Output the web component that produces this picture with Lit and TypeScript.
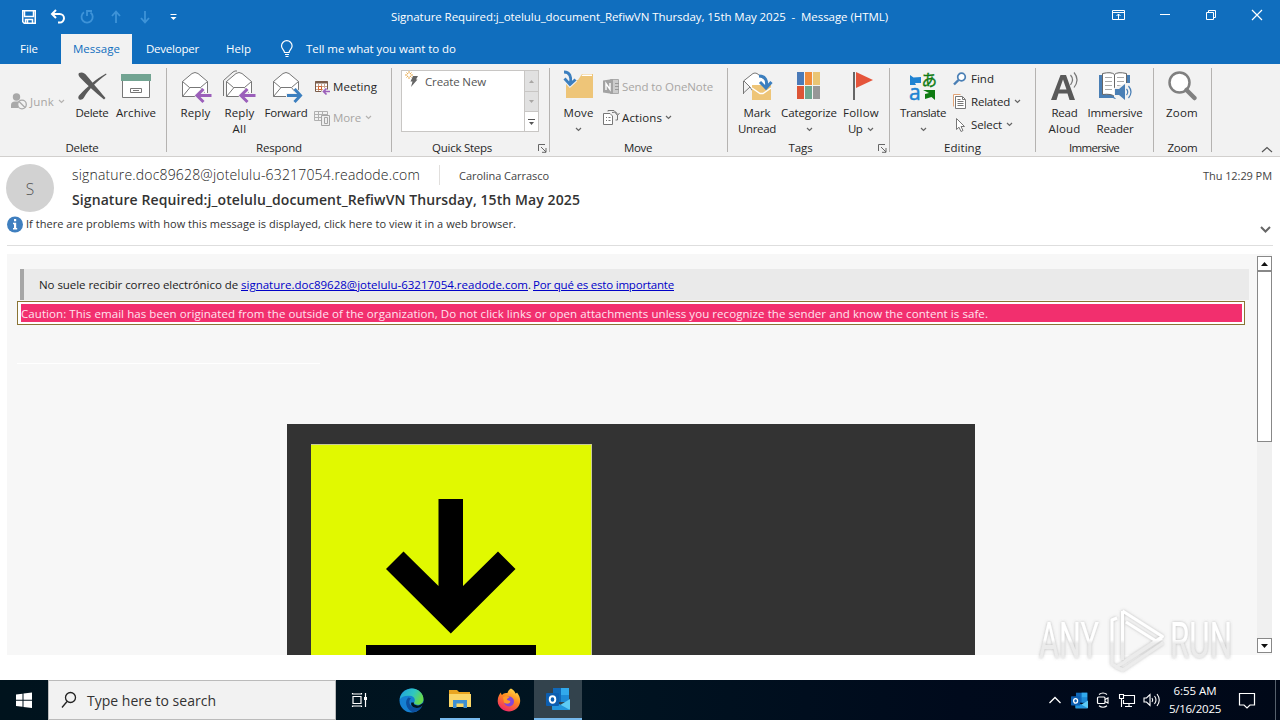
import { LitElement, html, css, svg } from "lit";
import { customElement, property } from "lit/decorators.js";

/** A run of text that is tracked in or out to take exactly `w` pixels. */
@customElement("fit-text")
export class FitText extends LitElement {
  static styles = css`
    :host {
      display: inline-block;
      white-space: pre;
      flex: none;
    }
  `;

  @property({ type: Number })
  w = 0;

  @property()
  text = "";

  updated() {
    this.style.width = "max-content";
    this.style.letterSpacing = "0";
    const natural = this.getBoundingClientRect().width;
    this.style.letterSpacing = `${(this.w - natural) / this.text.length}px`;
    this.style.width = `${this.w}px`;
  }

  render() {
    return html`${this.text}`;
  }
}

const t = (text: string, w: number) =>
  html`<fit-text .text=${text} .w=${w}></fit-text>`;

const icon = (w: number, h: number, body: unknown) =>
  html`<svg width=${w} height=${h} viewBox="0 0 ${w} ${h}" fill="none">
    ${body}
  </svg>`;

const chevron = (color = "#666") =>
  icon(7, 5, svg`<path d="M1 1l2.5 2.5L6 1" stroke=${color} stroke-width="1.2"/>`);

/* quick access and window icons */
const save = icon(
  16,
  16,
  svg`<path d="M1.75 1.75h12.5v12.5h-11l-1.5-1.5z" stroke="#fff" stroke-width="1.5"/><path d="M3.5 2v5.5h9V2M4.500 14.500v-4h7v4M6.500 11v3" stroke="#fff" stroke-width="1.5"/>`
);
const undo = icon(
  16,
  16,
  svg`<path d="M6 1L2 5l4 4M2.500 5h7.200a4.300 4.300 0 0 1 0 8.600H8" stroke="#fff" stroke-width="2"/>`
);
const redo = icon(
  16,
  16,
  svg`<path d="M5 3.300A5.600 5.600 0 1 0 11.500 3.500M8 7V2h5" stroke="#3e93d8" stroke-width="1.800"/>`
);
const up = icon(
  16,
  16,
  svg`<path d="M8 14V3M4 7l4-4.500L12 7" stroke="#3e93d8" stroke-width="1.800"/>`
);
const down = icon(
  16,
  16,
  svg`<path d="M8 2v11M4 9l4 4.500L12 9" stroke="#3e93d8" stroke-width="1.800"/>`
);
const customize = icon(
  16,
  16,
  svg`<path d="M4.500 5.500h6" stroke="#fff"/><path d="M4.500 8h6l-3 3z" fill="#fff"/>`
);
const ribbonMode = icon(
  14,
  12,
  svg`<path d="M.5 1.500h12v9H.5zM.5 3.500h12M6.500 10V5M4.500 7l2-2 2 2" stroke="#fff"/>`
);
const minimize = icon(12, 12, svg`<path d="M1 5.500h10" stroke="#fff"/>`);
const restore = icon(
  12,
  12,
  svg`<path d="M1.500 3.500h7v7h-7zM3.500 3V1.500h7v7H9" stroke="#fff"/>`
);
const close = icon(12, 12, svg`<path d="M1 1l10 10M11 1L1 11" stroke="#fff" stroke-width="1.200"/>`);
const bulb = icon(
  14,
  18,
  svg`<path d="M4.500 12.500c0-2.500-3-3.500-3-6.500a5.300 5.300 0 0 1 10.600 0c0 3-3 4-3 6.500zM5 14.500h4M5.500 16.500h3" stroke="#fff" stroke-width="1.200"/>`
);

/* large ribbon icons */
const deleteIcon = icon(
  32,
  32,
  svg`<path d="M3 3c3-1.500 6 0 8 3 6 7 10 12 18.500 22l-1.500 1.500C19 22 11 15 4 7.500 2.500 6 2 4 3 3z" fill="#5a5a5a"/><path d="M30.500 4.500C21 11 13 19 8 27.500c-1.500 2.500-4.500 3-5.500 1-.5-1.300 0-2.500 1-3.500C11 17 20 9 30 3.500z" fill="#5a5a5a"/>`
);
const archiveIcon = icon(
  32,
  32,
  svg`<path fill="#fff" stroke="#777" d="M2.500 9.500h27v18h-27z"/><path fill="#72a492" d="M1 4h30v7H1z"/><path stroke="#777" d="M10.500 18.500h11v4h-11zM13 20.500h6"/>`
);
const envelope = svg`<path fill="#fff" stroke="#777" d="M3.500 11.500L13 3.500q3-2 6 0l9.500 8v15h-25z"/><path stroke="#777" d="M3.500 11.500l7 6h11l7-6M3.500 26.500l7.500-9M28.500 26.500l-7-9"/>`;
const replyArrow = svg`<path d="M31 25.500H19M24.500 20l-6 5.500 6 5.500" stroke="#f2f2f2" stroke-width="5"/><path d="M32.500 25.500H19M24.500 19l-6.500 6.500 6.500 6.500" stroke="#9b5fba" stroke-width="3"/>`;
const replyIcon = icon(33, 32, svg`${envelope}${replyArrow}`);
const replyAllIcon = icon(
  33,
  32,
  svg`<path d="M.5 26V10.500L10 2q2-1.500 4-1" stroke="#777"/>${envelope}${replyArrow}`
);
const forwardIcon = icon(
  32,
  32,
  svg`${envelope}<path d="M16 25.500h14M24.500 19.500l6 6-6 6" stroke="#f2f2f2" stroke-width="5"/><path d="M17 25.500h13M24.500 19l6 6.500-6 6.500" stroke="#3c7fbf" stroke-width="3"/>`
);
const moveIcon = icon(
  32,
  32,
  svg`<path fill="#eec578" d="M3 28V10h12l4-6h11v24z"/><path fill="#fff" d="M18.500 6l1-1.500h9.500V6z"/><path d="M1 3c6-1 7.500 4 6.500 10M1.500 8.500l5.500 6 5.500-5" stroke="#f2f2f2" stroke-width="5"/><path d="M1 2c6 0 7.500 5 6.500 11M1.500 8.500l5.500 6 5.500-5" stroke="#3c7fbf" stroke-width="2.800"/>`
);
const unreadIcon = icon(
  32,
  32,
  svg`<path fill="#fff" stroke="#777" d="M2.500 24V11L12 3.500q2-1 4 0l10 8v10h-14L9 17M2.500 23L9 17 3 11"/><path fill="#eec578" d="M11 15h19v15H11z"/><path stroke="#fff" d="M11 18l8 5.500h3l8-5.500" stroke-width="1.500"/><path d="M18 6c7 0 8 5 7.500 10M19 12l6 6 5.500-6" stroke="#3c7fbf" stroke-width="3"/>`
);
const categorizeIcon = icon(
  32,
  32,
  svg`<path fill="#4a7ab8" d="M4 2h7v13H4z"/><path fill="#f08c3c" d="M12 2h7v13h-7z"/><path fill="#eac574" d="M20 2h7v13h-7z"/><path fill="#dc5536" d="M4 16h7v13H4z"/><path fill="#6ea68f" d="M12 16h7v13h-7z"/><path fill="#979797" d="M20 16h7v13h-7z"/>`
);
const flagIcon = icon(
  32,
  32,
  svg`<path fill="#e5553b" d="M11 2l17 8-17 8z"/><path fill="#666" d="M8 2h2v28H8z"/>`
);
const translateIcon = icon(
  32,
  32,
  svg`<path fill="#1e82d2" d="M3 5l3.500 2.500L14 7v6H8l1 2H3z"/><path fill="#0f7b12" d="M16 20h12v10l-3.500-3-6.500 2v-5l4-1z"/><text x="2" y="30" font-size="21" fill="#1e82d2" stroke="#1e82d2" stroke-width=".5">a</text><text x="14.500" y="15.500" font-size="15.500" font-family="Noto Sans CJK JP" fill="#0f7b12" stroke="#0f7b12" stroke-width=".4">あ</text>`
);
const readAloudIcon = icon(
  32,
  32,
  svg`<path fill="#595959" fill-rule="evenodd" d="M2 30L11.500 5H17L26 30h-5.500L18.500 23.500H9.500L7.500 30zM10.500 19.500h7L14 9.500z"/><path stroke="#777" stroke-width="1.200" d="M21.500 5q4 4.500 0 10M25 2.500q6 7 0 15"/>`
);
const readerIcon = icon(
  36,
  32,
  svg`<path fill="#4a7fb5" d="M2 5h31v23H20l-2 1-2-1H2z"/><path fill="#fff" stroke="#666" d="M5.500 3.500q9-2 12 1 3-3 12-1v21q-9-1-12 2-3-3-12-2zM17.500 5v21"/><path stroke="#aaa" d="M8 7.500h7M8 11.500h7M8 15.500h7M8 19.500h7M20 7.500h7M20 11.500h7M20 15.500h7"/><path fill="#f2f2f2" d="M17 18l12-5h7v20H24l-7-6z"/><path fill="#4a7fb5" d="M18 19h4l6-5v16l-6-5h-4z"/><path stroke="#4a7fb5" stroke-width="1.200" d="M29.500 19q2.500 3 0 6M31.500 16q5 6 0 12"/>`
);
const zoomIcon = icon(
  32,
  32,
  svg`<circle cx="13.500" cy="12.500" r="10" fill="#fff" stroke="#808080" stroke-width="2.500"/><path d="M20.500 20l8 8" stroke="#808080" stroke-width="4.500" stroke-linecap="round"/>`
);

/* small ribbon icons */
const junkIcon = icon(
  17,
  17,
  svg`<g fill="#a9a9a9"><circle cx="5.500" cy="4" r="3.700"/><path d="M0 15V12q0-3.500 4-3.500h4L7 15z"/></g><circle cx="11" cy="11.500" r="4.300" fill="#f2f2f2" stroke="#a9a9a9" stroke-width="1.300"/><path d="M8 8.500l6 6" stroke="#a9a9a9" stroke-width="1.300"/>`
);
const meetingIcon = icon(
  16,
  16,
  svg`<path d="M1.500 2.500h12v10h-12z" fill="#fff" stroke="#7a5c4a"/><path d="M1 3.500h13" stroke="#7a5c4a" stroke-width="2"/><path d="M4.500 5v7M7.500 5v7M10.500 5v5M2 7.500h11M2 10.500h8" stroke="#c9a38c"/><path stroke="#d5632e" d="M4.500 7.500h3v3h-3z"/><path d="M16 12.500h-6M12.500 9.500l-3 3 3 3" stroke="#f2f2f2" stroke-width="3.500"/><path d="M16 12.500h-6M12.500 9.500l-3 3 3 3" stroke="#9b5fba" stroke-width="1.700"/>`
);
const moreIcon = icon(
  16,
  16,
  svg`<path d="M.5 1.500h13v9H.5zM1 4.500h12M4.500 2v8M8.500 2v3M1 7.500h6" stroke="#b0b0b0"/><path d="M7.500 5.500h8v10h-8z" fill="#eee" stroke="#a4a4a4"/><path d="M10.500 7.500h3v6h-3z" stroke="#a4a4a4"/>`
);
const oneNoteIcon = icon(
  17,
  17,
  svg`<path fill="#ccc" stroke="#aaa" d="M7.500 1.500h8v14h-8z"/><path fill="#a3a3a3" d="M0 2.500L10 1v15L0 14.500z"/><path stroke="#fff" stroke-width="1.400" d="M3 12V5.500l4 6V5"/><path stroke="#999" d="M12 5.500h4M12 8.500h4M12 11.500h4"/>`
);
const actionsIcon = icon(
  17,
  17,
  svg`<path fill="#fff" stroke="#777" d="M.5 4.500H7L9.500 7v8.500h-9z"/><path stroke="#777" d="M3 8.500h1M5.500 8.500h2M3 11.500h1M5.500 11.500h2M5 2.500V1.500h6l2 2M12.500 11h2V6M9 3.500q5-1 5.500 2M12.500 4l2 2.500 2-2.500"/>`
);
const findIcon = icon(
  14,
  14,
  svg`<circle cx="8.500" cy="5" r="3.800" fill="#fff" stroke="#4a7fb5" stroke-width="1.700"/><path d="M5.500 8L1 12.500" stroke="#4a7fb5" stroke-width="2.400"/>`
);
const relatedIcon = icon(
  14,
  16,
  svg`<path fill="#fff" stroke="#e2a477" d="M.5 12.500V.5h7"/><path fill="#fff" stroke="#777" d="M2.500 2.500h7l3 3v9h-10z"/><path stroke="#777" d="M9.500 3v2.500H12M4.500 7.500h6M4.500 9.500h6M4.500 11.500h6M4.500 5.500h3"/>`
);
const selectIcon = icon(
  14,
  16,
  svg`<path fill="#fff" stroke="#777" d="M3.500 1.500v11l2.500-2.300 2 4.300 2-1-2-4h3.500z"/>`
);
const boltIcon = icon(
  16,
  18,
  svg`<path fill="#666" d="M8 5h5l-2 3.500h1.500L6 16l1.500-5.500H5.500z"/><path stroke="#e6a84a" d="M4 0v8M0 4h8M1.500 1.500l5 5M6.500 1.500l-5 5"/><circle cx="4" cy="4" r="1.700" fill="#fff"/>`
);
const launcher = icon(
  9,
  9,
  svg`<path stroke="#666" d="M.5 7V.5H7M3 3l5 5M8 4v4.300H4"/>`
);
const arrow = (dir: "up" | "down", color: string) =>
  icon(7, 4, svg`<path fill=${color} d=${dir === "up" ? "M0 4h7L3.500 0z" : "M0 0h7L3.500 4z"} />`);
const spinArrow = (dir: "up" | "down", color: string) =>
  icon(5, 3, svg`<path fill=${color} d=${dir === "up" ? "M0 3h5L2.500 0z" : "M0 0h5L2.500 3z"} />`);

/* taskbar icons */
const windowsIcon = icon(
  16,
  16,
  svg`<path fill="#fff" d="M0 2.500l6.500-.8v6H0zM7.500 1.500l8.500-1v7.200H7.500zM0 8.700h6.500v6l-6.500-.8zM7.500 8.700H16V16l-8.500-1z"/>`
);
const searchIcon = icon(
  16,
  18,
  svg`<circle cx="9.500" cy="6.500" r="5" stroke="#222" stroke-width="1.300"/><path d="M6 10.500l-5 6" stroke="#222" stroke-width="1.300"/>`
);
const taskViewIcon = icon(
  16,
  16,
  svg`<path stroke="#fff" stroke-width="1.200" d="M1 4.500h8v7H1zM.5 2.500V1M9.500 2.500V1M.5 2h9M.5 15v-1.500M9.500 15v-1.500M.5 14h9M13.500 1v14"/><path fill="#fff" d="M12 5h3v3h-3z"/>`
);
const edgeIcon = html`<svg width="25" height="25" viewBox="0 0 24 24">
  <defs>
    <linearGradient id="e1" x1="0" y1="0" x2="1" y2=".4">
      <stop offset="0" stop-color="#1f9fe0" />
      <stop offset=".6" stop-color="#2fc6c0" />
      <stop offset="1" stop-color="#66d84e" />
    </linearGradient>
  </defs>
  <circle cx="12" cy="12" r="11.500" fill="#1580d2" />
  <path fill="url(#e1)" d="M.6 11C2 3.500 8 .4 12.500.5 19 .7 23.600 5.500 23.500 11c-.1 3.500-3 5-5.500 5-2 0-4-.8-3.500-2 1.500-2 .8-6-4-6.500C6 7 2 8.500.6 11z" />
  <path fill="#0d4f9e" d="M9 9c-4 3-2.500 11 4 14.200 4 0 7.500-2.500 8.500-5.200-5 2.500-11 .5-11.500-4-.2-2 .5-3.500 1.500-4.200z" />
  <path fill="#03141e" d="M14.400 14c-1 1.500 1.500 3.300 5 2.500 2-.5 3.500-1.700 4-3v3l-3 2c-5 2-10-1-8.500-4.500z" />
</svg>`;
const explorerIcon = icon(
  22,
  20,
  svg`<path fill="#e9a520" d="M0 1h8l2 2h11v6H0z"/><path fill="#fbd667" d="M0 5h22v13H0z"/><path fill="#3f8fd2" d="M4 11h14v8h-3.500v-4.500h-7V19H4z"/>`
);
const firefoxIcon = html`<svg width="24" height="24" viewBox="0 0 24 24">
  <defs>
    <linearGradient id="f1" x1=".8" y1="0" x2=".3" y2="1">
      <stop offset="0" stop-color="#ffe14a" />
      <stop offset=".45" stop-color="#ff8a1f" />
      <stop offset="1" stop-color="#f0246a" />
    </linearGradient>
  </defs>
  <path fill="url(#f1)" d="M14 .5c3 1.500 4 3.500 4.500 5 1 0 1.500-1 1.500-1 3 4 3.500 7 3 10-1 5.500-6 9-11 9S1 19.500.7 13.500C.5 9 2.500 6 4 4.500c0 1.500.5 2 1 2.500C6.500 5 9 5 10.500 5c.5-2 2-4 3.500-4.500z" />
  <circle cx="12" cy="13.500" r="5" fill="#8445d8" />
  <path fill="#ff9a26" d="M6 9.500c2-2 5-1.500 6.500 0-2 .5-2.500 1.500-2.500 2.500 2 .5 4 .5 3 2.500-2 2-5 1-6 0z" />
</svg>`;
const outlookIcon = (size: number) => html`<svg width=${size} height=${size} viewBox="0 0 24 24">
  <path fill="#1068b8" d="M7 1h16v14H7z" />
  <path fill="#31a9ec" d="M15 1h8v7h-8z" />
  <path fill="#1d8ad6" d="M15 8h8v7h-8z" />
  <path fill="#5dcbf5" d="M6 23l18-11v10q0 1-1 1z" />
  <path fill="#2396dd" d="M6 13l18 10H7q-1 0-1-1z" />
  <rect x="0" y="6" width="13" height="13" rx="1" fill="#0c5eb0" />
  <ellipse cx="6.500" cy="12.500" rx="2.800" ry="3.200" fill="none" stroke="#fff" stroke-width="1.900" />
</svg>`;
const trayCaret = icon(14, 8, svg`<path d="M1.500 7L7 1.500 12.500 7" stroke="#fff" stroke-width="1.300"/>`);
const cameraIcon = icon(
  14,
  16,
  svg`<rect x="1.500" y="5" width="7.500" height="6.500" rx="1" stroke="#fff" stroke-width="1.200"/><path d="M9 7.500l3-1.500v5L9 9.500M3 2.500q4-3 8 0M3 13.700q4 3 8 0" stroke="#fff" stroke-width="1.100"/>`
);
const networkIcon = icon(
  16,
  15,
  svg`<path d="M5 2.500h10.500v8H4.500V7M10 10.500v3M6 13.500h7M.5 1.500h4v4h-4zM2.500 6v8" stroke="#fff" stroke-width="1.100"/>`
);
const volumeIcon = icon(
  17,
  14,
  svg`<path d="M1 5h2.500L7 1.500v11L3.500 9H1zM9 5q1.500 2 0 4M11.500 3q3 4 0 8M14 1q4.500 6 0 12" stroke="#fff" stroke-width="1.100"/>`
);
const noticeIcon = icon(
  18,
  17,
  svg`<path d="M1.500 1.500h15v11.500H12L9 16l-3-3H1.500z" stroke="#fff" stroke-width="1.200"/>`
);

@customElement("app-root")
export default class AppRoot extends LitElement {
  static styles = css`
    :host {
      display: flex;
      flex-direction: column;
      position: relative;
      width: 1280px;
      height: 720px;
      overflow: hidden;
      background: #fff;
      color: #262626;
      font-family: "Open Sans", "Noto Sans", sans-serif;
      font-size: 11.5px;
      line-height: 16px;
    }
    * {
      box-sizing: border-box;
    }
    svg {
      display: block;
      flex: none;
      overflow: visible;
    }

    .titlebar {
      display: grid;
      grid-template-columns: 391px 1fr auto;
      height: 34px;
      background: #106ebe;
      color: #fff;
      align-items: center;
      justify-items: start;
    }
    .quick {
      display: flex;
      padding-left: 14px;
    }
    .quick > * {
      width: 29px;
      display: flex;
      justify-content: center;
    }
    .window {
      display: flex;
      height: 34px;
      padding-bottom: 4px;
    }
    .window > * {
      width: 46px;
      display: flex;
      align-items: center;
      justify-content: center;
    }

    .tabs {
      display: flex;
      align-items: center;
      height: 30px;
      background: #106ebe;
      color: #fff;
      padding-left: 20px;
    }
    .tab {
      margin-right: 27px;
    }
    .tab.file {
      margin-right: 23px;
    }
    .tab.active {
      height: 30px;
      padding: 7px 12px;
      margin-right: 14px;
      background: #f2f2f2;
      color: #106ebe;
    }
    .tell {
      display: flex;
      align-items: center;
      gap: 12px;
      margin-left: 2px;
    }

    .ribbon {
      display: flex;
      height: 93px;
      background: #f2f2f2;
      border-bottom: 1px solid #d2d0ce;
      padding-top: 4px;
    }
    .group {
      display: flex;
      flex-direction: column;
      height: 84px;
      border-right: 1px solid #b5b3b1;
    }
    .delete { width: 167px; }
    .respond { width: 225px; padding-left: 7px; }
    .steps { width: 158px; padding-left: 9px; }
    .move { width: 178px; padding-left: 7px; }
    .tags { width: 162px; padding-left: 6px; }
    .editing { width: 146px; padding-left: 9px; }
    .immersive { width: 118px; padding-left: 7px; }
    .zoomg { width: 58px; padding-left: 5px; }
    .items {
      display: flex;
      height: 72px;
      flex: none;
    }
    .caption {
      display: flex;
      justify-content: center;
      position: relative;
      height: 16px;
    }
    .delete .caption { padding-right: 2px; }
    .respond .caption { padding-right: 7px; }
    .steps .caption { padding-right: 26px; }
    .move .caption { padding-right: 8px; }
    .tags .caption { padding-right: 22px; }
    .editing .caption { padding-right: 9px; }
    .immersive .caption { padding-right: 8px; }
    .zoomg .caption { padding-right: 5px; }
    .caption svg {
      position: absolute;
      right: 2px;
      top: 4px;
    }
    .big {
      display: flex;
      flex-direction: column;
      align-items: center;
      padding-top: 2px;
      flex: none;
    }
    .big > svg {
      margin-bottom: 3px;
    }
    .w43 { width: 43px; }
    .w45 { width: 45px; }
    .w46 { width: 46px; }
    .w48 { width: 48px; }
    .w40 { width: 40px; }
    .w58 { width: 58px; }
    .drop {
      height: 16px;
      display: flex;
      align-items: center;
      gap: 5px;
    }
    .small {
      display: flex;
      flex-direction: column;
    }
    .row {
      display: flex;
      align-items: center;
      height: 23px;
      gap: 3px;
    }
    .row .chev {
      margin-left: 2px;
    }
    .disabled {
      color: #a8a6a4;
    }
    .junk {
      width: 72px;
      padding: 22px 0 0 11px;
    }
    .junk .row {
      gap: 2px;
    }
    .two {
      padding: 7px 0 0 4px;
      gap: 8px;
    }
    .two .chev {
      margin-left: 1px;
    }
    .move .two {
      padding-left: 3px;
    }
    .move .row {
      gap: 2px;
    }
    .three {
      padding-left: 6px;
      margin-top: -1px;
    }
    .three .row {
      gap: 4px;
    }
    .three .chev {
      margin-left: 0;
    }

    .gallery {
      display: grid;
      grid-template-columns: 1fr 14px;
      width: 138px;
      height: 62px;
      margin-top: 2px;
      border: 1px solid #c8c6c4;
      background: #fff;
    }
    .step {
      display: flex;
      gap: 4px;
      padding-left: 3px;
      color: #555;
    }
    .step fit-text {
      margin-top: 3px;
    }
    .spin {
      display: grid;
      grid-template-rows: 21px 20px 1fr;
      border-left: 1px solid #c8c6c4;
    }
    .spin > * {
      display: grid;
      place-content: center;
      justify-items: center;
      gap: 2px;
      background: #e1e1e1;
      border-bottom: 1px solid #c8c6c4;
    }
    .spin > :last-child {
      background: #fff;
      border: 0;
    }
    .collapse {
      margin: 78px 0 0 49px;
    }

    .header {
      display: grid;
      grid-template-columns: 66px 1fr;
      grid-template-rows: 48px auto;
      align-content: start;
      height: 88px;
      padding: 7px 8px 0 6px;
    }
    .avatar {
      width: 48px;
      height: 48px;
      border-radius: 50%;
      background: #d2d2d2;
      color: #555;
      font: 300 15.5px/50px "Open Sans", sans-serif;
      text-align: center;
    }
    .from {
      display: flex;
      align-items: center;
      height: 22px;
      font-size: 11px;
      color: #444;
    }
    .sender {
      font-size: 14px;
      font-weight: 300;
      color: #222;
    }
    .to {
      border-left: 1px solid #e1dfdd;
      margin-left: 19px;
      padding: 3px 0 1px 19px;
    }
    .time {
      margin: 2px 0 0 auto;
    }
    .subject {
      font-size: 14px;
      font-weight: 600;
      line-height: 20px;
      margin-top: 4px;
      color: #333;
    }
    .info {
      grid-column: 1 / -1;
      display: flex;
      align-items: center;
      gap: 3px;
      height: 18px;
      font-size: 11px;
      color: #333;
      margin-top: 3px;
    }
    .info .expand {
      margin: 11px 1px 0 auto;
    }
    .rule {
      height: 1px;
      margin: 0 7px;
      background: #dedede;
    }

    .message {
      display: flex;
      justify-content: space-between;
      height: 401px;
      margin: 8px 8px 0 7px;
      background: #f7f7f7;
      overflow: hidden;
    }
    .mail {
      width: 1242px;
      padding: 15px 0 0 10px;
      color: #222;
    }
    .notice {
      height: 31px;
      margin-left: 3px;
      border-left: 4px solid #a6a6a6;
      background: #eaeaea;
      padding: 8px 0 0 15px;
      display: flex;
    }
    .notice a {
      color: #0000c8;
    }
    .notice a fit-text {
      text-decoration: underline;
    }
    .caution {
      width: 1228px;
      height: 24px;
      margin-top: 1px;
      border: 1px solid #8a7434;
      background: #fff;
      padding: 2px 2px 2px 3px;
    }
    .caution div {
      height: 18px;
      background: #f22f6e;
      color: #ffe3ee;
      line-height: 19px;
    }
    .hair {
      width: 303px;
      height: 1px;
      margin-top: 38px;
      background: #fff;
    }
    .card {
      width: 688px;
      height: 231px;
      margin: 60px 0 0 270px;
      padding: 20px 24px;
      background: #333;
    }
    .scroll {
      display: flex;
      flex-direction: column;
      width: 15px;
      margin: 2px 0;
      background: #f0f0f0;
    }
    .btn {
      display: grid;
      place-content: center;
      height: 15px;
      border: 1px solid #888;
      background: #fff;
      flex: none;
    }
    .thumb {
      height: 171px;
      border: 1px solid #888;
      background: #fff;
      margin-bottom: auto;
    }

    .mark {
      position: absolute;
      left: 1030px;
      top: 600px;
    }

    .taskbar {
      display: flex;
      align-items: center;
      height: 40px;
      margin-top: 25px;
      background: linear-gradient(90deg, #00131d, #001421 45%, #000a1c 75%, #000818);
      color: #fff;
    }
    .start,
    .task {
      display: flex;
      align-items: center;
      justify-content: center;
      width: 48px;
      height: 40px;
    }
    .search {
      display: flex;
      align-items: center;
      gap: 10px;
      width: 288px;
      height: 40px;
      padding-left: 12px;
      background: #f2f2f2;
      border: 1px solid #bbb;
      color: #333;
      font-size: 14px;
    }
    .search fit-text {
      margin-top: 2px;
    }
    .task {
      margin-right: 1px;
    }
    .task.view {
      margin-right: 3px;
    }
    .task.open {
      width: 40px;
      margin: 0 5px 0 4px;
      border-bottom: 2px solid #76b9ed;
    }
    .task.current {
      background: #33434d;
      border-bottom: 2px solid #76b9ed;
    }
    .tray {
      display: flex;
      align-items: center;
      margin-left: auto;
    }
    .cell {
      display: flex;
      justify-content: center;
      width: 24px;
    }
    .clock {
      display: flex;
      flex-direction: column;
      align-items: center;
      line-height: 18px;
      width: 52px;
      margin-left: 6px;
    }
    .notes {
      margin: 0 19px 0 17px;
    }
    .edge {
      width: 5px;
      height: 40px;
      border-left: 1px solid #56606c;
    }
  `;

  private _big(cls: string, glyph: unknown, ...lines: unknown[]) {
    return html`<div class="big ${cls}">${glyph}${lines}</div>`;
  }

  private _row(glyph: unknown, label: unknown, drop = false, disabled = false) {
    return html`<div class="row ${disabled ? "disabled" : ""}">
      ${glyph}${label}${drop
        ? html`<span class="chev">${chevron(disabled ? "#b5b3b1" : "#666")}</span>`
        : ""}
    </div>`;
  }

  private _drop(label: unknown = "") {
    return html`<span class="drop">${label}${chevron()}</span>`;
  }

  private _ribbon() {
    return html`<div class="ribbon">
      <div class="group delete">
        <div class="items">
          <div class="junk">${this._row(junkIcon, t("Junk", 24), true, true)}</div>
          ${this._big("w40", deleteIcon, t("Delete", 33))}
          ${this._big("w48", archiveIcon, t("Archive", 40))}
        </div>
        <div class="caption">${t("Delete", 33)}</div>
      </div>
      <div class="group respond">
        <div class="items">
          ${this._big("w43", replyIcon, t("Reply", 30))}
          ${this._big("w45", replyAllIcon, t("Reply", 30), t("All", 14))}
          ${this._big("w48", forwardIcon, t("Forward", 43))}
          <div class="small two">
            ${this._row(meetingIcon, t("Meeting", 44))}
            ${this._row(moreIcon, t("More", 28), true, true)}
          </div>
        </div>
        <div class="caption">${t("Respond", 46)}</div>
      </div>
      <div class="group steps">
        <div class="items">
          <div class="gallery">
            <div class="step">${boltIcon}${t("Create New", 61)}</div>
            <div class="spin">
              <span>${spinArrow("up", "#a8a6a4")}</span>
              <span>${spinArrow("down", "#a8a6a4")}</span>
              <span>${icon(7, 1, svg`<path fill="#555" d="M0 0h7v1H0z"/>`)}${spinArrow("down", "#555")}</span>
            </div>
          </div>
        </div>
        <div class="caption">${t("Quick Steps", 60)}${launcher}</div>
      </div>
      <div class="group move">
        <div class="items">
          ${this._big("w43", moveIcon, t("Move", 30), this._drop())}
          <div class="small two">
            ${this._row(oneNoteIcon, t("Send to OneNote", 91), false, true)}
            ${this._row(actionsIcon, t("Actions", 40), true)}
          </div>
        </div>
        <div class="caption">${t("Move", 28)}</div>
      </div>
      <div class="group tags">
        <div class="items">
          ${this._big("w46", unreadIcon, t("Mark", 27), t("Unread", 38))}
          ${this._big("w58", categorizeIcon, t("Categorize", 56), this._drop())}
          ${this._big("w46", flagIcon, t("Follow", 36), this._drop(t("Up", 14)))}
        </div>
        <div class="caption">${t("Tags", 24)}${launcher}</div>
      </div>
      <div class="group editing">
        <div class="items">
          ${this._big("w48", translateIcon, t("Translate", 46), this._drop())}
          <div class="small three">
            ${this._row(findIcon, t("Find", 23))}
            ${this._row(relatedIcon, t("Related", 39), true)}
            ${this._row(selectIcon, t("Select", 31), true)}
          </div>
        </div>
        <div class="caption">${t("Editing", 37)}</div>
      </div>
      <div class="group immersive">
        <div class="items">
          ${this._big("w43", readAloudIcon, t("Read", 26), t("Aloud", 32))}
          ${this._big("w58", readerIcon, t("Immersive", 55), t("Reader", 37))}
        </div>
        <div class="caption">${t("Immersive", 50)}</div>
      </div>
      <div class="group zoomg">
        <div class="items">${this._big("w46", zoomIcon, t("Zoom", 32))}</div>
        <div class="caption">${t("Zoom", 30)}</div>
      </div>
      <div class="collapse">
        ${icon(12, 7, svg`<path d="M1 6l5-4.500L11 6" stroke="#555" stroke-width="1.200"/>`)}
      </div>
    </div>`;
  }

  private _watermark() {
    return html`<svg class="mark" width="240" height="80" viewBox="0 0 240 80" fill="none">
      <defs>
        <linearGradient id="w" gradientUnits="userSpaceOnUse" x1="0" y1="12" x2="0" y2="70">
          <stop offset="0" stop-color="#fff" />
          <stop offset=".48" stop-color="#fff" />
          <stop offset=".54" stop-color="#ebebeb" />
          <stop offset="1" stop-color="#ececec" />
        </linearGradient>
        <filter id="s" x="-10%" y="-10%" width="120%" height="130%">
          <feDropShadow dx="0" dy="0" stdDeviation="1.800" flood-color="#777" flood-opacity=".5" />
        </filter>
      </defs>
      <g filter="url(#s)">
        <g font-family="Roboto, sans-serif" font-size="50" fill="url(#w)">
          <text x="9" y="58" textLength="60" lengthAdjust="spacingAndGlyphs">ANY</text>
          <text x="140" y="58" textLength="62" lengthAdjust="spacingAndGlyphs">RUN</text>
        </g>
        <path
          d="M87 18l-5 2v44l5 3M92.500 11v49M92.500 11l40 25.500-38 25M96 22l30 19M132 38L93 63l-7 4 7 3 40-27"
          stroke="url(#w)"
          stroke-width="3"
          stroke-linejoin="round"
        />
      </g>
    </svg>`;
  }

  render() {
    return html`
      <div class="titlebar">
        <div class="quick">
          ${[save, undo, redo, up, down, customize].map((i) => html`<span>${i}</span>`)}
        </div>
        ${t(
          "Signature Required:j_otelulu_document_RefiwVN Thursday, 15th May 2025  -  Message (HTML)",
          497
        )}
        <div class="window">
          ${[ribbonMode, minimize, restore, close].map((i) => html`<span>${i}</span>`)}
        </div>
      </div>
      <div class="tabs">
        <span class="tab file">${t("File", 18)}</span>
        <span class="tab active">${t("Message", 47)}</span>
        <span class="tab">${t("Developer", 53)}</span>
        <span class="tab">${t("Help", 25)}</span>
        <span class="tell">${bulb}${t("Tell me what you want to do", 150)}</span>
      </div>
      ${this._ribbon()}
      <div class="header">
        <div class="avatar">S</div>
        <div>
          <div class="from">
            <span class="sender">
              ${t("signature.doc89628@jotelulu-63217054.readode.com", 348)}
            </span>
            <span class="to">${t("Carolina Carrasco", 90)}</span>
            <span class="time">${t("Thu 12:29 PM", 69)}</span>
          </div>
          <div class="subject">
            ${t("Signature Required:j_otelulu_document_RefiwVN Thursday, 15th May 2025", 508)}
          </div>
        </div>
        <div class="info">
          ${icon(
            17,
            17,
            svg`<circle cx="9" cy="8.500" r="8" fill="#3f7fbf"/><path fill="#fff" d="M8 3h2.200v2.200H8zM7 6.700h3.200v5.300h1v1.500H7V12h1V8.200H7z"/>`
          )}
          ${t(
            "If there are problems with how this message is displayed, click here to view it in a web browser.",
            490
          )}
          <span class="expand">
            ${icon(11, 7, svg`<path d="M1 1l4.500 4.500L10 1" stroke="#666" stroke-width="2"/>`)}
          </span>
        </div>
      </div>
      <div class="rule"></div>
      <div class="message">
        <div class="mail">
          <div class="notice">
            ${t("No suele recibir correo electrónico de ", 202)}<a
              >${t("signature.doc89628@jotelulu-63217054.readode.com", 287)}</a
            >${t(". ", 5)}<a>${t("Por qué es esto importante", 141)}</a>
          </div>
          <div class="caution">
            <div>
              ${t(
                "Caution: This email has been originated from the outside of the organization, Do not click links or open attachments unless you recognize the sender and know the content is safe.",
                967
              )}
            </div>
          </div>
          <div class="hair"></div>
          <div class="card">
            ${icon(
              281,
              211,
              svg`<path fill="#e1f900" d="M0 0h281v211H0z"/><path stroke="#c9cc96" d="M0 .5h280.500V211"/><path fill="#000" d="M127.500 55h24.500v87l35-34.500 17.500 17.500-64.700 64.500L75 125l17.500-17.500 35 34.500zM55 201h170v10H55z"/>`
            )}
          </div>
        </div>
        <div class="scroll">
          <div class="btn">${arrow("up", "#111")}</div>
          <div class="thumb"></div>
          <div class="btn">${arrow("down", "#111")}</div>
        </div>
      </div>
      <div class="taskbar">
        <div class="start">${windowsIcon}</div>
        <div class="search">${searchIcon}${t("Type here to search", 129)}</div>
        <div class="task view">${taskViewIcon}</div>
        <div class="task">${edgeIcon}</div>
        <div class="task open">${explorerIcon}</div>
        <div class="task">${firefoxIcon}</div>
        <div class="task current">${outlookIcon(24)}</div>
        <div class="tray">
          ${[trayCaret, outlookIcon(17), cameraIcon, networkIcon, volumeIcon].map(
            (i) => html`<span class="cell">${i}</span>`
          )}
          <div class="clock">${t("6:55 AM", 43)}${t("5/16/2025", 52)}</div>
          <span class="notes">${noticeIcon}</span>
          <span class="edge"></span>
        </div>
      </div>
      ${this._watermark()}
    `;
  }
}
